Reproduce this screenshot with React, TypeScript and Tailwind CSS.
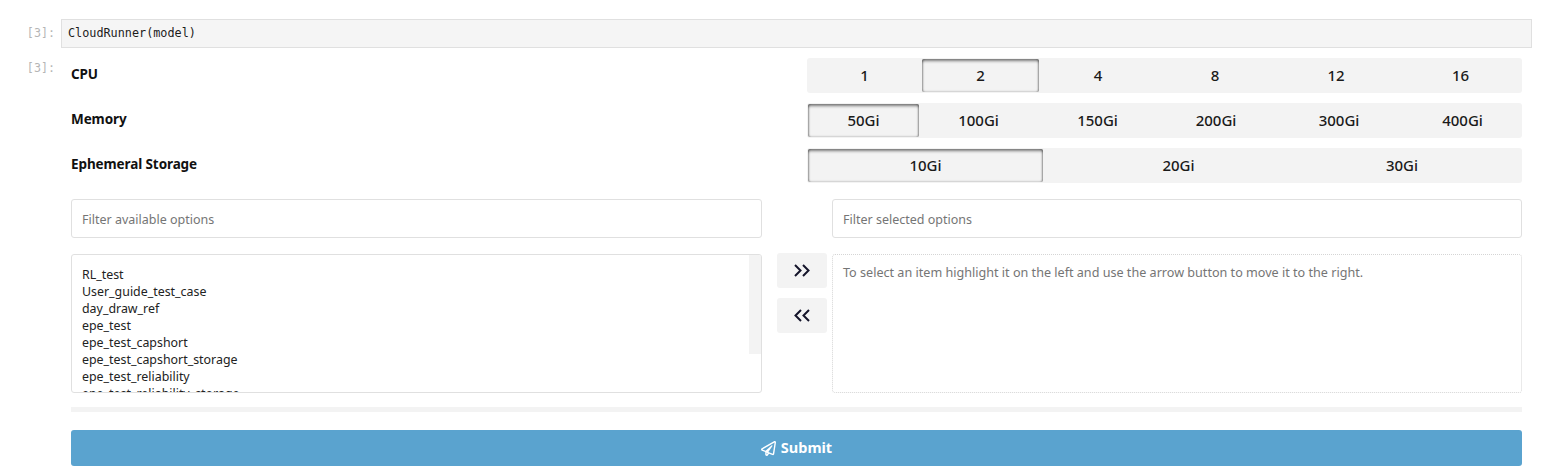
import React from "react";
import { FaRegPaperPlane } from "react-icons/fa";

const sel = "shadow-[inset_0_3px_3px_-1px_rgba(0,0,0,0.5),inset_2px_0_2px_-1px_rgba(0,0,0,0.35),inset_-2px_0_2px_-1px_rgba(0,0,0,0.35),inset_0_-2px_2px_-1px_rgba(0,0,0,0.12)]";

type Opt = { label: string; w: number; active?: boolean; pl?: number };

function Seg({ label, opts, inset, mb }: { label: string; opts: Opt[]; inset: number; mb?: boolean }) {
  return (
    <div className={`flex h-[35px] items-center ${mb ? "mb-[10px]" : ""}`}>
      <div className="w-[746px] pb-[2px] pl-[10px] text-[13.5px] font-bold tracking-[-0.1px] text-[#111]">{label}</div>
      <div className="flex h-[35px] w-[715px] rounded-[3px] bg-[#f3f3f3]" style={{ paddingLeft: inset }}>
        {opts.map((o) => (
          <div
            key={o.label}
            style={{ width: o.w, paddingLeft: o.pl ?? 0 }}
            className={`flex shrink-0 items-center justify-center pb-[1px] text-[15px] font-medium text-[#1a1a1a] ${
              o.active ? `${sel} my-[1px] rounded-[2px]` : ""
            }`}
          >
            {o.label}
          </div>
        ))}
      </div>
    </div>
  );
}

const items = [
  "RL_test",
  "User_guide_test_case",
  "day_draw_ref",
  "epe_test",
  "epe_test_capshort",
  "epe_test_capshort_storage",
  "epe_test_reliability",
  "epe_test_reliability_storage",
];

function Chevrons({ left }: { left?: boolean }) {
  return (
    <svg width="16" height="13" viewBox="0 0 16 13" fill="none" stroke="#14142a" strokeWidth="2" className={left ? "-scale-x-100" : ""}>
      <polyline points="1,1 6.5,6.5 1,12" />
      <polyline points="9,1 14.5,6.5 9,12" />
    </svg>
  );
}

export default function App() {
  return (
    <div className="h-[474px] w-[1542px] overflow-hidden bg-white font-['Noto_Sans','Open_Sans',sans-serif]">
      <div className="pt-[19px] pr-[10px]">
        <div className="flex">
          <div className="w-[61px] shrink-0 pr-[6px] pt-[7px] text-right font-['DejaVu_Sans_Mono',monospace] text-[11.7px] leading-[15px] text-[#b5b5b5]">
            [3]:
          </div>
          <div className="h-[29px] flex-1 border border-[#e0e0e0] bg-[#f5f5f5] pl-[6px] font-['DejaVu_Sans_Mono',monospace] text-[11.8px] leading-[26px] text-[#1c1c1c]">
            CloudRunner(model)
          </div>
        </div>
        <div className="mt-[10px] flex">
          <div className="w-[61px] shrink-0 pr-[6px] pt-[3px] text-right font-['DejaVu_Sans_Mono',monospace] text-[11.7px] leading-[15px] text-[#b5b5b5]">
            [3]:
          </div>
          <div className="w-[1461px] shrink-0">
            <Seg
              label="CPU"
              inset={0}
              mb
              opts={[
                { label: "1", w: 115 },
                { label: "2", w: 117, active: true },
                { label: "4", w: 118 },
                { label: "8", w: 116 },
                { label: "12", w: 126 },
                { label: "16", w: 123 },
              ]}
            />
            <Seg
              label="Memory"
              inset={1}
              mb
              opts={[
                { label: "50Gi", w: 111, active: true },
                { label: "100Gi", w: 119 },
                { label: "150Gi", w: 119 },
                { label: "200Gi", w: 118 },
                { label: "300Gi", w: 128 },
                { label: "400Gi", w: 119 },
              ]}
            />
            <Seg
              label="Ephemeral Storage"
              inset={1}
              opts={[
                { label: "10Gi", w: 235, active: true },
                { label: "20Gi", w: 239, pl: 32 },
                { label: "30Gi", w: 240 },
              ]}
            />

            <div className="mt-[16px] flex pl-[10px]">
              <div className="flex h-[39px] w-[691px] items-center rounded-[3px] border border-[#e0e0e0] pl-[10px] pt-[3px] text-[12.5px] text-[#757575]">
                Filter available options
              </div>
              <div className="w-[70px]" />
              <div className="flex h-[39px] w-[690px] items-center rounded-[3px] border border-[#e0e0e0] pl-[10px] pt-[3px] text-[12.5px] text-[#757575]">
                Filter selected options
              </div>
            </div>

            <div className="mt-[16px] flex pl-[10px]">
              <div className="relative h-[139px] w-[691px] overflow-hidden rounded-[3px] border border-[#e0e0e0] pl-[10px] pt-[11px] text-[12.4px] leading-[17px] text-[#222]">
                {items.map((t) => (
                  <div key={t}>{t}</div>
                ))}
                <div className="absolute right-0 top-0 h-[99px] w-[12px] bg-[#f3f3f3]" />
              </div>
              <div className="flex w-[70px] flex-col pl-[15px]">
                <button className="-mt-[1px] flex h-[35px] w-[50px] items-center justify-center rounded-[3px] bg-[#f3f3f3] pb-[1px]">
                  <Chevrons />
                </button>
                <button className="mt-[10px] flex h-[35px] w-[50px] items-center justify-center rounded-[3px] bg-[#f3f3f3] pb-[1px]">
                  <Chevrons left />
                </button>
              </div>
              <div className="h-[139px] w-[690px] rounded-[3px] border border-dotted border-[#d5d5d5] pl-[10px] pt-[9px] text-[12.6px] leading-[17px] text-[#757575]">
                To select an item highlight it on the left and use the arrow button to move it to the right.
              </div>
            </div>

            <div className="ml-[10px] mt-[14px] h-[5px] bg-[#f3f3f3]" />

            <button className="ml-[10px] mt-[18px] flex h-[36px] w-[1451px] items-center justify-center gap-[5px] rounded-[3px] bg-[#5aa3cf] text-[14.5px] font-bold text-white">
              <FaRegPaperPlane size={15} />
              Submit
            </button>
          </div>
        </div>
      </div>
    </div>
  );
}
